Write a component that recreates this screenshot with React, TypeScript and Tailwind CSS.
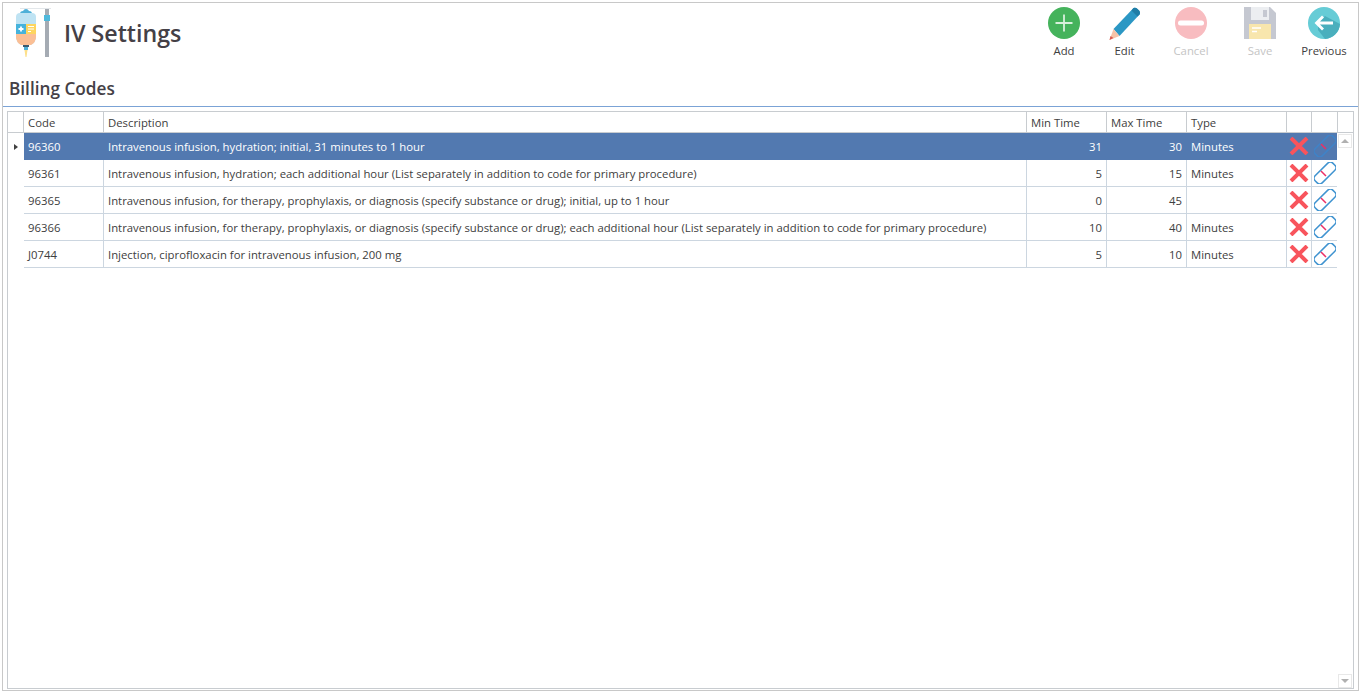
import React from "react";

const rows = [
  { code: "96360", desc: "Intravenous infusion, hydration; initial, 31 minutes to 1 hour", min: "31", max: "30", type: "Minutes" },
  { code: "96361", desc: "Intravenous infusion, hydration; each additional hour (List separately in addition to code for primary procedure)", min: "5", max: "15", type: "Minutes" },
  { code: "96365", desc: "Intravenous infusion, for therapy, prophylaxis, or diagnosis (specify substance or drug); initial, up to 1 hour", min: "0", max: "45", type: "" },
  { code: "96366", desc: "Intravenous infusion, for therapy, prophylaxis, or diagnosis (specify substance or drug); each additional hour (List separately in addition to code for primary procedure)", min: "10", max: "40", type: "Minutes" },
  { code: "J0744", desc: "Injection, ciprofloxacin for intravenous infusion, 200 mg", min: "5", max: "10", type: "Minutes" },
];

const IvIcon = () => (
  <svg width="36" height="52" viewBox="0 0 36 52">
    <rect x="5" y="0" width="32" height="1" fill="#e3e7ea" />
    <rect x="30" y="1" width="4" height="48" fill="#a5abb3" />
    <rect x="29" y="7" width="6" height="6" fill="#4fb9dc" />
    <path d="M5 6 q0-3 3-3 q1-2 3-2 t3 2 q3 0 3 3z" fill="#4fb0d8" />
    <path d="M1 9 q0-4 4-4 h12 q4 0 4 4 v20 q0 5-5 8 h-10 q-5-3-5-8z" fill="#bfe3f3" />
    <path d="M1 25 h20 v4 q0 5-5 8 h-10 q-5-3-5-8z" fill="#fbbf95" />
    <rect x="1" y="16" width="10" height="10" fill="#46b3dc" />
    <rect x="11" y="16" width="10" height="10" fill="#fdd55f" />
    <path d="M3.500 21 h5 M6 18.500 v5" stroke="#fff" strokeWidth="1.800" />
    <path d="M13 18.500 h6 M13 21 h6 M13 23.500 h3" stroke="#fff" strokeWidth="1.200" />
    <rect x="8" y="37" width="6" height="2" fill="#3b5a70" />
    <rect x="9" y="39" width="4" height="3" fill="#4fb0d8" />
    <path d="M9.500 42 h3 l-1 7 h-1z" fill="#fde08a" />
  </svg>
);

const AddIcon = () => (
  <svg width="32" height="32" viewBox="0 0 32 32">
    <circle cx="16" cy="16" r="16" fill="#45b35c" />
    <path d="M16 7.500 v17 M7.500 16 h17" stroke="#d8f0dc" strokeWidth="1.800" />
  </svg>
);

const EditIcon = () => (
  <svg width="32" height="33" viewBox="2 0 31 33">
    <path d="M6 22 L26 1 q2-1 4 1 l2 2 q1 2 0 3.500 L12 29z" fill="#2b97c4" />
    <path d="M26 1 q2-1 4 1 l2 2 q1 2 0 3.500 l-2 2 L24 3.500z" fill="#1f7da6" />
    <path d="M6 22 L12 29 L2 33z" fill="#f6c3a8" />
    <path d="M2 33 l1-4 3 2z" fill="#d9584f" />
  </svg>
);

const CancelIcon = () => (
  <svg width="32" height="32" viewBox="0 0 32 32">
    <circle cx="16" cy="16" r="16" fill="#f8bcc0" />
    <rect x="3" y="13.500" width="26" height="5" rx="2.500" fill="#fff" />
  </svg>
);

const SaveIcon = () => (
  <svg width="32" height="32" viewBox="0 0 32 32">
    <path d="M0 0 h26 l6 6 v26 h-32z" fill="#c5c8d1" />
    <path d="M7 0 h18 v13 h-18z" fill="#eceef1" />
    <rect x="19" y="3" width="4" height="7" fill="#c5c8d1" />
    <rect x="5" y="17" width="22" height="15" fill="#f8e6ad" />
    <path d="M8 21 h9 M8 24.500 h5" stroke="#fff" strokeWidth="1.300" />
  </svg>
);

const PreviousIcon = () => (
  <svg width="32" height="32" viewBox="0 0 32 32">
    <circle cx="16" cy="16" r="16" fill="#66ccd6" />
    <path d="M10 16 L17 9 L32 17 A16 16 0 0 1 17 32 L10 23z" fill="#4aafbd" />
    <path d="M15 9.500 L8.500 16 L15 22.500 M9 16 H25" fill="none" stroke="#fff" strokeWidth="2.800" />
  </svg>
);

const CrossIcon = () => (
  <svg width="20" height="18" viewBox="0 0 20 18">
    <path d="M2 1 L18 17 M18 1 L2 17" stroke="#f8545c" strokeWidth="4" />
  </svg>
);

const PillIcon = ({ faded }: { faded?: boolean }) => (
  <svg width="22" height="22" viewBox="0 0 22 22">
    <rect x="-1.500" y="6" width="25" height="10" rx="3.500" transform="rotate(-45 11 11)" fill="none" stroke={faded ? "#3f83c8" : "#3f93d0"} strokeWidth="1.500" />
    <path d="M7 9 L12 14" stroke="#ec2f66" strokeWidth="1.500" />
  </svg>
);

const toolbar = [
  { label: "Add", icon: <AddIcon />, w: "w-[64px]", off: false },
  { label: "Edit", icon: <EditIcon />, w: "w-[57px]", off: false },
  { label: "Cancel", icon: <CancelIcon />, w: "w-[76px]", off: true },
  { label: "Save", icon: <SaveIcon />, w: "w-[62px]", off: true },
  { label: "Previous", icon: <PreviousIcon />, w: "w-[66px]", off: false },
];

export default function App() {
  return (
    <div className="h-[693px] w-[1361px] bg-white p-[2px] font-['Open_Sans','Noto_Sans',sans-serif] text-[11.33px] text-[#404040]">
      <div className="flex h-[689px] flex-col border border-[#c8c8c8]">
        <div className="flex h-[75px] shrink-0 justify-between">
          <div className="flex items-center pl-[12px] pb-[13px]">
            <IvIcon />
            <div className="ml-[13px] -mt-[2px] text-[23.200px] leading-[30px] font-semibold text-[#444046]">IV Settings</div>
          </div>
          <div className="flex pt-[3px] pr-[1px]">
            {toolbar.map((t) => (
              <div key={t.label} className={`flex flex-col items-center ${t.w}`}>
                <div className="flex h-[34px] items-center">{t.icon}</div>
                <div className={`mt-[3px] text-[11.33px] leading-[16px] ${t.off ? "text-[#c4c4c4]" : "text-[#404040]"}`}>{t.label}</div>
              </div>
            ))}
          </div>
        </div>
        <div className="h-[29px] shrink-0 border-b border-[#7ba3d6] pl-[6px] text-[17.200px] leading-[22px] font-semibold text-[#444046]">
          Billing Codes
        </div>
        <div className="mx-[4px] mt-[4px] mb-[1px] flex min-h-0 flex-1 flex-col border border-[#c8ccd0]">
          <div className="flex h-[21px] shrink-0 border-b border-[#c8ccd0] leading-[22px]">
            <div className="w-[16px] border-r border-[#c8ccd0]" />
            <div className="w-[80px] border-r border-[#c8ccd0] pl-[4px]">Code</div>
            <div className="w-[923px] border-r border-[#c8ccd0] pl-[4px]">Description</div>
            <div className="w-[80px] border-r border-[#c8ccd0] pl-[4px]">Min Time</div>
            <div className="w-[80px] border-r border-[#c8ccd0] pl-[4px]">Max Time</div>
            <div className="w-[100px] border-r border-[#c8ccd0] pl-[4px]">Type</div>
            <div className="w-[25px] border-r border-[#c8ccd0]" />
            <div className="w-[26px] border-r border-[#c8ccd0]" />
          </div>
          <div className="relative min-h-0 flex-1">
            {rows.map((r, i) => {
              const sel = i === 0;
              const line = sel ? "border-[#5279b0]" : "border-[#ccd6e0]";
              return (
                <div key={r.code} className="flex h-[27px] leading-[27px]">
                  <div className="flex w-[16px] items-center justify-center">
                    {sel && <div className="h-0 w-0 border-y-[3.500px] border-l-[4px] border-y-transparent border-l-[#404040]" />}
                  </div>
                  <div className={`flex ${sel ? "bg-[#5279b0] text-white" : ""}`}>
                    <div className={`w-[80px] border-r border-b pl-[4px] ${line}`}>{r.code}</div>
                    <div className={`w-[923px] overflow-hidden border-r border-b pl-[4px] whitespace-nowrap ${line}`}>{r.desc}</div>
                    <div className={`w-[80px] border-r border-b pr-[4px] text-right ${line}`}>{r.min}</div>
                    <div className={`w-[80px] border-r border-b pr-[4px] text-right ${line}`}>{r.max}</div>
                    <div className={`w-[100px] border-r border-b pl-[4px] ${line}`}>{r.type}</div>
                    <div className={`flex w-[25px] items-center justify-center border-r border-b ${line}`}><CrossIcon /></div>
                    <div className={`flex w-[25px] items-center justify-center border-b ${line}`}><PillIcon faded={sel} /></div>
                  </div>
                </div>
              );
            })}
            <div className="absolute top-[1px] right-[1px] flex h-[14px] w-[14px] items-center justify-center border border-[#e8e8e8]">
              <div className="h-0 w-0 border-x-[4px] border-b-[4px] border-x-transparent border-b-[#b0b0b0]" />
            </div>
            <div className="absolute right-[1px] bottom-[0px] flex h-[14px] w-[14px] items-center justify-center border border-[#e8e8e8]">
              <div className="h-0 w-0 border-x-[4px] border-t-[4px] border-x-transparent border-t-[#b0b0b0]" />
            </div>
          </div>
        </div>
      </div>
    </div>
  );
}
